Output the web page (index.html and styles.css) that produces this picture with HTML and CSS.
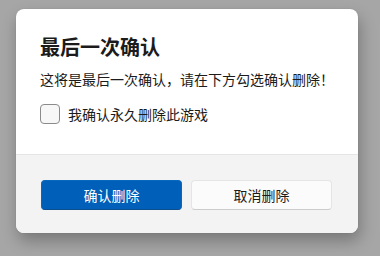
FILE: index.html
```html
<!DOCTYPE html>
<html lang="zh-CN">
<head>
<meta charset="utf-8">
<link rel="stylesheet" href="styles.css">
</head>
<body>
<div class="dialog">
  <div class="content">
    <h1 class="title">最后一次确认</h1>
    <p class="message">这将是最后一次确认，请在下方勾选确认删除！</p>
    <label class="check">
      <span class="box"></span>
      <span class="check-label">我确认永久删除此游戏</span>
    </label>
  </div>
  <div class="footer">
    <button class="btn primary">确认删除</button>
    <button class="btn secondary">取消删除</button>
  </div>
</div>
</body>
</html>
```

FILE: styles.css
```css
html, body {
  margin: 0;
  padding: 0;
  width: 380px;
  height: 256px;
  background: #a6a6a6;
  overflow: hidden;
  font-family: "Noto Sans CJK SC", "Noto Sans", sans-serif;
}

body {
  padding: 9px 0 0 16px;
  box-sizing: border-box;
}

.dialog {
  width: 342px;
  height: 224px;
  background: #ffffff;
  border-radius: 8px;
  overflow: hidden;
  box-shadow: 2px 8px 16px rgba(0, 0, 0, 0.28), 0 0 1px rgba(0, 0, 0, 0.2);
  display: flex;
  flex-direction: column;
}

.content {
  padding: 24px 24px 0 24px;
  height: 145px;
  flex: none;
  box-sizing: border-box;
}

.title {
  margin: 0;
  font-size: 20px;
  line-height: 28px;
  font-weight: 700;
  color: #1b1b1b;
}

.message {
  margin: 8px 0 0 0;
  font-size: 14px;
  line-height: 20px;
  color: #1b1b1b;
}

.check {
  display: flex;
  align-items: center;
  gap: 8px;
  margin-top: 15px;
}

.box {
  width: 18px;
  height: 18px;
  border: 1px solid #8b8b8b;
  border-radius: 4px;
  background: #f7f7f7;
  flex: none;
}

.check-label {
  font-size: 14px;
  line-height: 20px;
  color: #1b1b1b;
}

.footer {
  flex: 1;
  background: #f3f3f3;
  border-top: 1px solid #e5e5e5;
  padding: 25px 24px 0 25px;
  display: flex;
  gap: 9px;
}

.btn {
  width: 141px;
  height: 30px;
  border-radius: 4px;
  font-family: inherit;
  font-size: 14px;
  line-height: 20px;
  padding: 0;
}

.primary {
  background: #005fb8;
  color: #ffffff;
  border: 1px solid #0a67be;
  border-bottom-color: #0b4f8f;
}

.secondary {
  background: #fbfbfb;
  color: #1b1b1b;
  border: 1px solid #e5e5e5;
  border-bottom-color: #cccccc;
}
```
